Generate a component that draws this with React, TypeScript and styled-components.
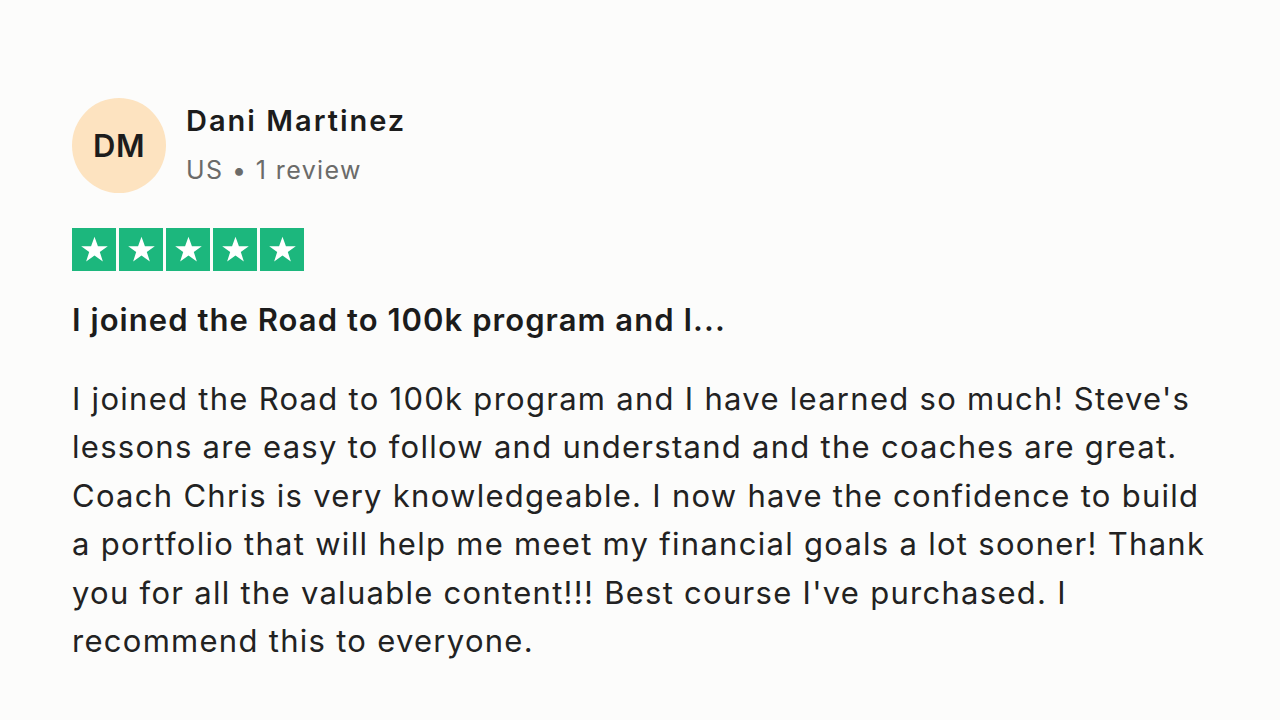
import React from 'react';
import styled, {createGlobalStyle} from 'styled-components';

const GlobalStyle = createGlobalStyle`
    html, body {
        margin: 0;
        padding: 0;
        background: #fcfcfb;
    }
    body {
        font-family: Inter, "Open Sans", sans-serif;
        color: #1c1c1c;
    }
`;

const review = {
    initials: 'DM',
    name: 'Dani Martinez',
    country: 'US',
    reviews: '1 review',
    rating: 5,
    title: 'I joined the Road to 100k program and I...',
    body: "I joined the Road to 100k program and I have learned so much! Steve's lessons are easy to follow and understand and the coaches are great. Coach Chris is very knowledgeable. I now have the confidence to build a portfolio that will help me meet my financial goals a lot sooner! Thank you for all the valuable content!!! Best course I've purchased. I recommend this to everyone.",
};

const Star = () => (
    <svg width="31" height="31" viewBox="0 0 24 24">
        <path
            d="M12 2.2l2.65 7.2h7.65l-6.2 4.5 2.37 7.3L12 16.7l-6.47 4.5 2.37-7.3-6.2-4.5h7.65z"
            fill="#fff"
        />
    </svg>
);

const App = () => {
    return (
        <Page>
            <GlobalStyle/>
            <Card>
                <Header>
                    <Avatar>{review.initials}</Avatar>
                    <Who>
                        <Name>{review.name}</Name>
                        <Meta>{review.country} • {review.reviews}</Meta>
                    </Who>
                </Header>
                <Stars>
                    {Array.from({length: review.rating}).map((_, i) => (
                        <StarBox key={i}><Star/></StarBox>
                    ))}
                </Stars>
                <Title>{review.title}</Title>
                <Body>{review.body}</Body>
            </Card>
        </Page>
    );
};

const Page = styled.main`
    width: 1280px;
    height: 720px;
    box-sizing: border-box;
    padding: 98px 0 0 72px;
`;

const Card = styled.article`
    width: 1140px;
    display: flex;
    flex-direction: column;
`;

const Header = styled.div`
    display: flex;
    align-items: flex-start;
    gap: 20px;
`;

const Avatar = styled.div`
    width: 94px;
    height: 95px;
    border-radius: 50%;
    background: #fde3c0;
    display: flex;
    align-items: center;
    justify-content: center;
    font-size: 31px;
    font-weight: 600;
    color: #1c1c1c;
    letter-spacing: 0.5px;
`;

const Who = styled.div`
    display: flex;
    flex-direction: column;
    padding-top: 5px;
    gap: 16px;
`;

const Name = styled.div`
    font-size: 29px;
    font-weight: 600;
    line-height: 36px;
    letter-spacing: 2px;
`;

const Meta = styled.div`
    font-size: 25px;
    line-height: 30px;
    color: #6b6b69;
    letter-spacing: 1.4px;
`;

const Stars = styled.div`
    display: flex;
    gap: 3px;
    margin-top: 35px;
`;

const StarBox = styled.div`
    width: 44px;
    height: 43px;
    background: #1cb77d;
    display: flex;
    align-items: center;
    justify-content: center;
`;

const Title = styled.h2`
    margin: 29px 0 0;
    font-size: 31px;
    font-weight: 600;
    line-height: 40px;
    letter-spacing: 1.05px;
`;

const Body = styled.p`
    margin: 35px 0 0;
    font-size: 31px;
    line-height: 48.4px;
    letter-spacing: 1.28px;
    color: #222;
`;

export default App;
